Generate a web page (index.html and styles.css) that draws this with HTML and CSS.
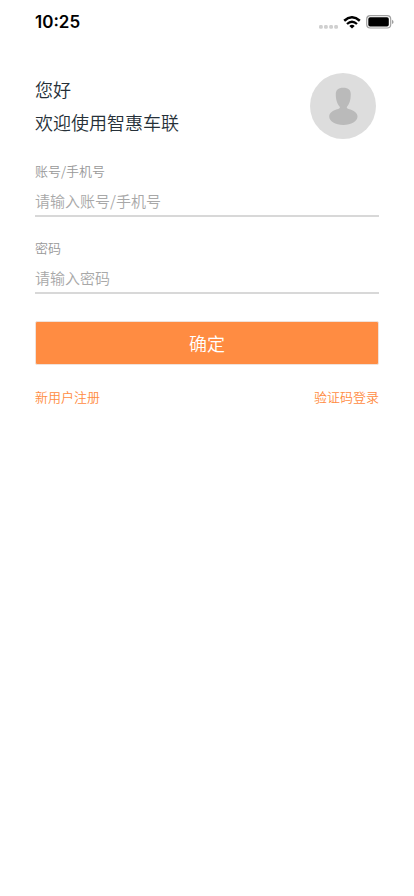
FILE: index.html
```html
<!DOCTYPE html>
<html lang="zh-CN">
<head>
<meta charset="utf-8">
<meta name="viewport" content="width=device-width, initial-scale=1">
<title>登录</title>
<link rel="stylesheet" href="styles.css">
</head>
<body>
<div class="status-bar">
  <time class="clock">10:25</time>
  <div class="status-icons">
    <svg class="signal" width="19" height="4" viewBox="0 0 19 4" aria-hidden="true">
      <rect x="0" y="0" width="3.800" height="3.800" rx="1.400"/>
      <rect x="5" y="0" width="3.800" height="3.800" rx="1.400"/>
      <rect x="10.200" y="0" width="3.800" height="3.800" rx="1.400"/>
      <rect x="15.200" y="0" width="3.800" height="3.800" rx="1.400"/>
    </svg>
    <svg class="wifi" width="18" height="13" viewBox="0 0 18 13" aria-hidden="true">
      <path d="M1.200 4.800Q9 -2.200 16.800 4.800" fill="none" stroke="#000" stroke-width="2.500"/>
      <path d="M4 8Q9 3.400 14 8" fill="none" stroke="#000" stroke-width="2.300"/>
      <path d="M6.300 9.900Q9 7.700 11.700 9.900L9 12.600Z"/>
    </svg>
    <svg class="battery" width="28" height="14" viewBox="0 0 28 14" aria-hidden="true">
      <rect x="0.700" y="0.700" width="24" height="12.300" rx="3.500" fill="none" stroke="#a0a0a0" stroke-width="1.200"/>
      <rect x="2.300" y="2.300" width="20.500" height="9.200" rx="1.800"/>
      <path d="M26 4.800Q27.600 5.500 27.600 6.900T26 9Z" fill="#a0a0a0"/>
    </svg>
  </div>
</div>
<main class="login">
  <header class="greeting">
    <h1 class="greeting-text">您好<br>欢迎使用智惠车联</h1>
    <svg class="avatar" width="66" height="66" viewBox="0 0 66 66" role="img" aria-label="头像">
      <circle cx="33" cy="33" r="33" fill="#ddd"/>
      <path d="M33.300 14.800C38.500 14.800 40.800 17 40.800 21.500C40.800 27.500 39 31.500 37 33.800C36.400 35 37 35.500 38.500 36C44 37.200 47.500 40 47.500 43.500C47.500 48.300 41.300 52 33.300 52S19.200 48.300 19.200 43.500C19.200 40 22.700 37.200 28.200 36C29.700 35.500 30.300 35 29.700 33.800C27.700 31.500 25.800 27.500 25.800 21.500C25.800 17 28.100 14.800 33.300 14.800Z" fill="#bababa"/>
    </svg>
  </header>
  <form class="form">
    <div class="field">
      <label class="label" for="account">账号/手机号</label>
      <input class="input" id="account" type="text" placeholder="请输入账号/手机号">
    </div>
    <div class="field">
      <label class="label" for="password">密码</label>
      <input class="input" id="password" type="password" placeholder="请输入密码">
    </div>
    <button class="submit" type="submit">确定</button>
  </form>
  <nav class="links">
    <a class="link" href="#register">新用户注册</a>
    <a class="link" href="#code">验证码登录</a>
  </nav>
</main>
</body>
</html>
```
FILE: styles.css
```css
* {
  box-sizing: border-box;
}

body {
  margin: 0;
  background: #fff;
  color: #263038;
  font-family: "Noto Sans CJK SC", sans-serif;
  font-weight: 350;
}

.status-bar {
  display: flex;
  align-items: center;
  justify-content: space-between;
  height: 44px;
  padding: 0 20px 0 35px;
}

.clock {
  color: #000;
  font: 600 17px/20px Inter, sans-serif;
}

.status-icons {
  display: flex;
  align-items: center;
  gap: 5px;
}

.signal {
  fill: #d0d0d0;
  align-self: flex-end;
}

.login {
  padding: 29px 35px;
}

.greeting {
  display: flex;
  align-items: center;
  justify-content: space-between;
  padding-right: 3px;
}

.greeting-text {
  margin: 0;
  font-size: 18px;
  font-weight: 350;
  line-height: 33px;
}

.form {
  display: flex;
  flex-direction: column;
  gap: 21px;
  padding-top: 22px;
}

.field {
  display: flex;
  flex-direction: column;
  gap: 5px;
}

.label {
  color: #999;
  font-size: 13px;
  line-height: 20px;
}

.input {
  width: 100%;
  height: 31px;
  padding: 0;
  border: 0;
  border-bottom: 2px solid #d8d8d8;
  border-radius: 0;
  outline: 0;
  background: transparent;
  color: #263038;
  font-family: inherit;
  font-size: 15px;
  font-weight: 350;
}

.input::placeholder {
  color: #a8a8a8;
  opacity: 1;
}

.submit {
  height: 44px;
  margin-top: 6px;
  padding: 0;
  border: 1px solid #f0e2da;
  border-radius: 2px;
  background: #ff8c42;
  color: #fff;
  font-family: inherit;
  font-size: 18px;
  font-weight: 350;
}

.links {
  display: flex;
  justify-content: space-between;
  padding-top: 22px;
}

.link {
  color: #ff8c42;
  font-size: 13px;
  line-height: 20px;
  text-decoration: none;
}
```
